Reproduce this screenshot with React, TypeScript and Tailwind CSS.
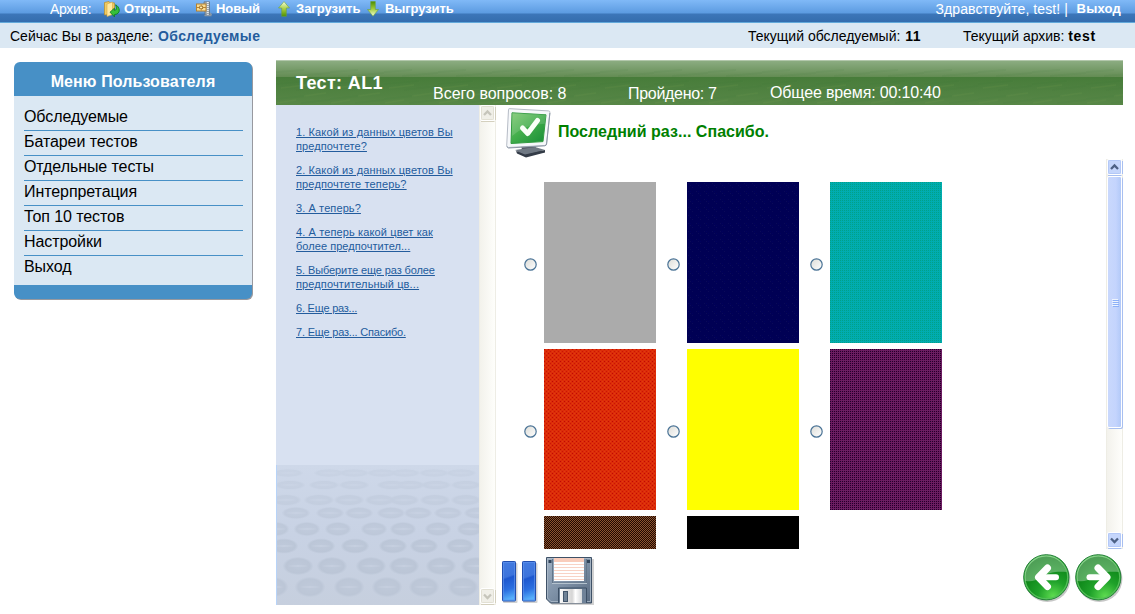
import React from 'react';

const menu = ['Обследуемые', 'Батареи тестов', 'Отдельные тесты', 'Интерпретация', 'Топ 10 тестов', 'Настройки', 'Выход'];

type Line = { text: string; style: string };

const questions: Line[][] = [
  [{ text: '1. Какой из данных цветов Вы', style: 'tracking-[0.12px]' }, { text: 'предпочтете?', style: 'tracking-[0.1px]' }],
  [{ text: '2. Какой из данных цветов Вы', style: 'tracking-[0.12px]' }, { text: 'предпочтете теперь?', style: 'tracking-[0.15px]' }],
  [{ text: '3. А теперь?', style: 'tracking-[0.1px]' }],
  [{ text: '4. А теперь какой цвет как', style: 'tracking-[0.12px]' }, { text: 'более предпочтител...', style: 'tracking-[0.05px]' }],
  [{ text: '5. Выберите еще раз более', style: 'tracking-[-0.1px]' }, { text: 'предпочтительный цв...', style: 'tracking-[0.12px]' }],
  [{ text: '6. Еще раз...', style: 'tracking-[-0.22px]' }],
  [{ text: '7. Еще раз... Спасибо.', style: 'tracking-[-0.2px]' }],
];

type Dither = { id: string; size: number; base: string; dots: [number, number, string][] };

const swatches: Dither[] = [
  { id: 'gray', size: 2, base: '#ababab', dots: [] },
  { id: 'navy', size: 8, base: '#000054', dots: [[1, 1, '#0a0a58'], [3, 3, '#0a0a58'], [5, 5, '#0a0a58'], [3, 1, '#00005c'], [5, 3, '#00005c']] },
  { id: 'teal', size: 2, base: '#00acb0', dots: [[0, 0, '#00a088']] },
  { id: 'red', size: 4, base: '#dc2c08', dots: [[0, 0, '#c00804'], [2, 2, '#cc1404'], [2, 0, '#e03c10'], [0, 2, '#e03c10']] },
  { id: 'yellow', size: 2, base: '#ffff00', dots: [] },
  { id: 'purple', size: 2, base: '#78125a', dots: [[0, 0, '#180430'], [1, 1, '#602868']] },
  { id: 'brown', size: 2, base: '#200800', dots: [[0, 0, '#8c5430'], [1, 1, '#8c5430']] },
  { id: 'black', size: 2, base: '#000000', dots: [] },
];

function Swatch({ s }: { s: Dither }) {
  return (
    <svg width="112" height="161" className="block shrink-0" shapeRendering="crispEdges">
      <defs>
        <pattern id={s.id} width={s.size} height={s.size} patternUnits="userSpaceOnUse">
          <rect width={s.size} height={s.size} fill={s.base} />
          {s.dots.map(([x, y, c]) => <rect key={`${x}-${y}`} x={x} y={y} width="1" height="1" fill={c} />)}
        </pattern>
      </defs>
      <rect width="112" height="161" fill={`url(#${s.id})`} />
    </svg>
  );
}

function Radio() {
  return (
    <svg width="13" height="13" viewBox="0 0 13 13" className="mt-[3px] block shrink-0">
      <defs>
        <linearGradient id="radio" x1="0" y1="0" x2="1" y2="1">
          <stop offset="0" stopColor="#dcdcd7" />
          <stop offset="1" stopColor="#ffffff" />
        </linearGradient>
      </defs>
      <circle cx="6.5" cy="6.5" r="5.7" fill="url(#radio)" stroke="#4a7396" strokeWidth="1.2" />
    </svg>
  );
}

function FolderIcon() {
  return (
    <svg width="16" height="16" viewBox="0 0 16 16">
      <path d="M.5 1.5 5 .5l1 1.4h4.5V13L.5 14z" fill="#f0cb62" stroke="#b98c24" strokeWidth=".7" />
      <path d="m3 3 5.5-2v12.5L3 15.5z" fill="#ffe9a0" stroke="#d8aa42" strokeWidth=".6" />
      <path d="M6 11.2 10.4 7.2v2.2c2.2 0 2.6-2 1.2-5.6 4 1.6 6.2 9.2-1.2 9.8v2.2z" fill="#36c03a" stroke="#087a1c" strokeWidth=".8" />
    </svg>
  );
}

function ZipIcon() {
  return (
    <svg width="16" height="16" viewBox="0 0 16 16">
      <path d="M8 .8h5.5V14H9V3.5H8z" fill="#9aa5ae" stroke="#63717d" strokeWidth=".7" />
      <path d="M11.8 1v14" stroke="#e8edf0" strokeWidth="2" strokeDasharray="1 1" />
      <rect x=".5" y="3" width="9.5" height="7" fill="#f8dc94" stroke="#b58230" />
      <path d="M1 6.5h9M5.2 3.5v6" stroke="#b98231" />
      <rect x="3.7" y="5.2" width="3" height="2.5" fill="#fff1ba" stroke="#9a681c" strokeWidth=".7" />
      <path d="M8.5 14.5h7M14 12l1.5 2" stroke="#8b98a5" strokeWidth="1.3" />
    </svg>
  );
}

function VArrow({ down = false }: { down?: boolean }) {
  return (
    <svg width="12" height="16" viewBox="0 0 12 16">
      <defs>
        <linearGradient id="arrowup" x1="0" y1="0" x2="0" y2="1">
          <stop offset="0" stopColor="#f6ffdf" />
          <stop offset=".5" stopColor="#a9cf42" />
          <stop offset="1" stopColor="#4f9000" />
        </linearGradient>
        <linearGradient id="arrowdown" x1="0" y1="0" x2="0" y2="1">
          <stop offset="0" stopColor="#4a8d00" />
          <stop offset=".5" stopColor="#a2cc3b" />
          <stop offset="1" stopColor="#f4ffd8" />
        </linearGradient>
      </defs>
      {down
        ? <path d="M3.7 .5h4.6V8.5h3.2L6 15.2.5 8.5h3.2z" fill="url(#arrowdown)" stroke="#69a13a" strokeWidth=".6" />
        : <path d="M6 .6 11.5 7H8.3v8.3H3.7V7H.5z" fill="url(#arrowup)" stroke="#69a13a" strokeWidth=".6" />}
    </svg>
  );
}

function ScrollButton({ down = false, disabled = false }: { down?: boolean; disabled?: boolean }) {
  return (
    <svg width="17" height="17" viewBox="0 0 17 17" className="block shrink-0">
      <rect x="1.5" y=".5" width="14" height="15" rx="1.5" fill={disabled ? '#f0efe8' : '#c5d6fc'} stroke="#ffffff" />
      <path d="M2 16.5h13.5M16.5 2v13" stroke={disabled ? '#d4d0be' : '#a8bff0'} strokeWidth="1" />
      <rect x="2.5" y="1.5" width="12" height="13" rx="1" fill="none" stroke={disabled ? '#e2e0d4' : '#b3c8f7'} />
      <path d={down ? 'm5 6.5 3.5 3.5L12 6.5' : 'M5 10l3.5-3.5L12 10'} fill="none" stroke={disabled ? '#c6c5bb' : '#4d6185'} strokeWidth="2.3" />
    </svg>
  );
}

function MonitorIcon() {
  return (
    <svg width="46" height="50" viewBox="0 0 46 50">
      <defs>
        <linearGradient id="screen" x1="0" y1="0" x2="1" y2="1">
          <stop offset="0" stopColor="#78c66b" />
          <stop offset=".45" stopColor="#43ae4b" />
          <stop offset="1" stopColor="#168d36" />
        </linearGradient>
      </defs>
      <path d="m15 38 14-2 1 5 9 3-20 4.5-8-5 5-2z" fill="#4d535d" />
      <path d="m9 42 20-3 10 3-20 5z" fill="#6f7883" />
      <path d="m10 43 9 3.5 20-4.5v2.5l-19 5-9-4z" fill="#333b47" />
      <path d="M2.5 1.5Q2.3.5 4 .7l38.5 2.2q1.7.1 1.4 1.8L40.5 36q-.2 1.4-1.7 1.5L2.5 39.5q-1.8 0-1.8-1.7z" fill="#f6f8fa" stroke="#b5bbc5" />
      <path d="M.8 38.5 2.5 40l36.3-2.2q1.5-.2 1.8-1.8l3.3-31" fill="none" stroke="#8c97a5" />
      <path d="m6 4.8 34 2-3 26.8L5 35.5z" fill="url(#screen)" stroke="#329b40" />
      <path d="m6 4.8 34 2-1 9Q20 16 6 28z" fill="#fff" opacity=".14" />
      <path d="m16.5 20 5.2 5.5L31.5 12.5" fill="none" stroke="#f9fff7" strokeWidth="5" strokeLinecap="round" strokeLinejoin="round" />
    </svg>
  );
}

function PauseIcon() {
  return (
    <svg width="36" height="43" viewBox="0 0 36 43">
      <defs>
        <linearGradient id="pause" x1="0" y1="0" x2=".12" y2="1">
          <stop offset="0" stopColor="#447ce0" />
          <stop offset=".42" stopColor="#3b73dc" />
          <stop offset=".47" stopColor="#1d57cf" />
          <stop offset=".75" stopColor="#2b6fe0" />
          <stop offset="1" stopColor="#56b0fa" />
        </linearGradient>
      </defs>
      {[0, 20].map((x) => (
        <g key={x}>
          <rect x={x + 1} y="2" width="14.5" height="40" rx="1" fill="#000" opacity=".18" />
          <rect x={x + 0.5} y=".5" width="13" height="39.5" rx=".8" fill="url(#pause)" stroke="#214fb0" />
          <rect x={x + 1.5} y="1.5" width="11" height="37.5" fill="none" stroke="#5c92ec" opacity=".7" />
        </g>
      ))}
    </svg>
  );
}

function FloppyIcon() {
  return (
    <svg width="48" height="48" viewBox="0 0 48 48">
      <defs>
        <linearGradient id="disk" x1="0" y1="0" x2="1" y2="1">
          <stop offset="0" stopColor="#a1b1c3" />
          <stop offset=".5" stopColor="#7c8fa5" />
          <stop offset="1" stopColor="#57697f" />
        </linearGradient>
        <linearGradient id="shutter" x1="0" y1="0" x2="1" y2="0">
          <stop offset="0" stopColor="#fafafa" />
          <stop offset=".55" stopColor="#d5d5d5" />
          <stop offset=".7" stopColor="#ffffff" />
          <stop offset="1" stopColor="#d7d9db" />
        </linearGradient>
      </defs>
      <path d="M2 2h46v46H6l-4-5z" fill="#000" opacity=".18" />
      <path d="M.5.5h45v45.500H4.500l-4-4z" fill="url(#disk)" stroke="#3e5167" />
      <path d="M1.500 1.500h43v43H5l-3.500-3.500z" fill="none" stroke="#aebdca" strokeWidth=".8" />
      <path d="M6.500 2v24h34V2" fill="none" stroke="#63768a" />
      <path d="M6 26.500h35" stroke="#b4c2ce" />
      <rect x="8" y="1" width="30" height="23" fill="#ffffff" />
      <rect x="8" y="1" width="30" height="4" fill="#f9cdbc" />
      {[7, 10, 13, 16, 19, 22].map((y) => <rect key={y} x="8" y={y} width="30" height="1" fill="#f8d3c6" />)}
      <path d="M2.500 3h3v3h-3zM41 3h3v3h-3z" fill="#31445a" />
      <path d="M12.500 46V31h28v15" fill="#6f8298" stroke="#3d5066" />
      <rect x="14" y="32" width="22" height="14" fill="url(#shutter)" />
      <rect x="17.500" y="34.500" width="4" height="10" fill="#6f8296" stroke="#42556a" />
    </svg>
  );
}

function RoundArrow({ right = false }: { right?: boolean }) {
  return (
    <svg width="48" height="49" viewBox="0 0 48 49">
      <defs>
        <radialGradient id="ball" cx=".65" cy=".92" r=".85">
          <stop offset="0" stopColor="#5edc50" />
          <stop offset=".4" stopColor="#1fa12a" />
          <stop offset="1" stopColor="#04780f" />
        </radialGradient>
      </defs>
      <circle cx="24.4" cy="25" r="23" fill="#000" opacity=".22" />
      <circle cx="23.300" cy="23.300" r="22.600" fill="url(#ball)" stroke="#247f39" />
      <circle cx="23.300" cy="23.300" r="21.400" fill="none" stroke="#56bf5a" strokeWidth="1.2" />
      <path d="M2.200 27A21 21 0 0 1 43.700 18C33 17 23 19 18 23 13 27 8 28 2.200 27z" fill="#fff" opacity=".3" />
      <path
        d={right ? 'M14.500 23.300H30' : 'M33 23.300H17'}
        fill="none" stroke="#ffffff" strokeWidth="6" strokeLinecap="round"
      />
      <path
        d={right ? 'M23 14l9 9.300-9 9.300' : 'M24.500 14l-9 9.300 9 9.300'}
        fill="none" stroke="#ffffff" strokeWidth="7" strokeLinecap="round" strokeLinejoin="round"
      />
    </svg>
  );
}

const lips: [number, number, number, number, number[]][] = [
  [8, 15, 4, 0.2, [12, 53, 78, 106, 129, 158, 185]],
  [20, 15, 4.5, 0.25, [14, 48, 78, 116, 134, 160, 190]],
  [35, 15, 5.5, 0.3, [10, 43, 73, 104, 128, 159, 190]],
  [48, 14, 6, 0.4, [20, 54, 83, 115, 142, 172, 202]],
  [64, 13, 7, 0.5, [0, 31, 62, 98, 127, 162, 194]],
  [81, 14, 7.5, 0.6, [8, 45, 79, 117, 148, 184]],
  [101, 15, 9, 0.6, [22, 56, 95, 128, 165, 200]],
  [122, 15, 10, 0.55, [-3, 34, 73, 111, 148, 187]],
];

function Texture() {
  return (
    <svg width="203" height="140" className="block">
      <defs>
        <linearGradient id="floor" x1="0" y1="0" x2="0" y2="1">
          <stop offset="0" stopColor="#ced8e9" />
          <stop offset=".5" stopColor="#c8d2e4" />
          <stop offset="1" stopColor="#c6cfde" />
        </linearGradient>
        <radialGradient id="shade">
          <stop offset="0" stopColor="#bac5d6" />
          <stop offset=".8" stopColor="#b4bfd0" />
          <stop offset="1" stopColor="#b9c4d5" stopOpacity=".2" />
        </radialGradient>
      </defs>
      <rect width="203" height="140" fill="url(#floor)" />
      {lips.map(([y, rx, ry, o, xs]) => (
        <g key={y} opacity={o}>
          {xs.map((x) => <ellipse key={x} cx={x} cy={y} rx={rx} ry={ry} fill="url(#shade)" />)}
          {xs.map((x) => <path key={x} d={`M${x - 11} ${y}q11-1.500 22 0-11 1.500-22 0`} fill="#d1d9e6" opacity=".65" />)}
        </g>
      ))}
      <rect width="1" height="140" fill="#b7d3f8" />
    </svg>
  );
}

function HeaderTexture() {
  return (
    <svg width="847" height="45" className="block">
      <defs>
        <linearGradient id="gloss" x1="0" y1="0" x2="0" y2="1">
          <stop offset="0" stopColor="#8eae84" />
          <stop offset="1" stopColor="#638c53" />
        </linearGradient>
        <linearGradient id="grass" x1="0" y1="0" x2="0" y2="1">
          <stop offset="0" stopColor="#477c3a" />
          <stop offset="1" stopColor="#588747" />
        </linearGradient>
        <pattern id="blades" width="54" height="45" patternUnits="userSpaceOnUse">
          <path d="M0 12 28 10M18 16 54 13M0 24 35 21M20 30 54 26M0 39 30 36M25 43 54 40" stroke="#2e692b" strokeWidth="2" opacity=".08" />
          <path d="M5 28 30 25M28 36 50 33M1 43 20 40" stroke="#7ca552" strokeWidth="1.5" opacity=".12" />
        </pattern>
      </defs>
      <rect width="847" height="17" fill="url(#gloss)" />
      <rect y="17" width="847" height="28" fill="url(#grass)" />
      <rect width="847" height="45" fill="url(#blades)" />
      <rect width="847" height="1" fill="#b3c8ac" />
    </svg>
  );
}

export default function App() {
  return (
    <div className="h-[614px] w-[1135px] overflow-hidden bg-white font-['Liberation_Sans',Arial,sans-serif] text-black">
      <header className="flex h-[23px] items-start border-b border-[#62a9da] bg-[linear-gradient(#80b9f7_0px,#5c9be1_13px,#3c76b9_14px,#346dae_22px)] pl-[50px] text-white">
        <span className="w-[54px] text-[14px] leading-[18px] tracking-[-0.3px]">Архив:</span>
        <a className="flex h-[18px] w-[92px] items-center gap-1 text-[13px] font-bold"><FolderIcon /><span className="tracking-[-0.1px]">Открыть</span></a>
        <a className="flex h-[18px] w-[82px] items-center gap-1 text-[13px] font-bold"><ZipIcon /><span className="tracking-[-0.1px]">Новый</span></a>
        <a className="flex h-[18px] w-[89px] items-center gap-[6px] text-[13px] font-bold"><VArrow /><span>Загрузить</span></a>
        <a className="flex h-[18px] items-center gap-[6px] text-[13px] font-bold"><VArrow down /><span className="tracking-[-0.1px]">Выгрузить</span></a>
        <div className="ml-auto mr-[14px] flex text-[14px] leading-[18px]">
          <span className="w-[141px] whitespace-nowrap tracking-[0.08px]">Здравствуйте, test! |</span>
          <b className="text-[13px] tracking-[0.2px]">Выход</b>
        </div>
      </header>
      <div className="flex h-[25px] bg-[#dbe8f3] pl-[10px] text-[14px] leading-[26px]">
        <span className="w-[148px] whitespace-nowrap">Сейчас Вы в разделе:</span>
        <b className="tracking-[0.4px] text-[#235c9d]">Обследуемые</b>
        <span className="ml-auto w-[215px] whitespace-nowrap">Текущий обследуемый: <b className="ml-px tracking-[0.5px]">11</b></span>
        <span className="w-[172px] whitespace-nowrap">Текущий архив: <b className="tracking-[0.6px]">test</b></span>
      </div>

      <div className="flex items-start pl-[14px] pt-3">
        <nav className="mr-[24px] mt-[2px] w-[238px] overflow-hidden rounded-[6px] bg-[#4790c6] shadow-[1px_1px_0_#98999f]">
          <h2 className="h-[34px] pt-[8px] text-center text-[16px] font-bold leading-[24px] tracking-[0.1px] text-white">Меню Пользователя</h2>
          <ul className="h-[189px] bg-[#dbe8f3] pl-[10px] pr-[9px] pt-[10px]">
            {menu.map((m) => (
              <li key={m} className="h-[25px] border-b border-[#4790c6] text-[16px] leading-[21px] tracking-[-0.08px] last:border-0">{m}</li>
            ))}
          </ul>
          <div className="h-[14px]" />
        </nav>

        <main className="w-[847px]">
          <div className="grid h-[45px]">
            <div className="col-start-1 row-start-1"><HeaderTexture /></div>
            <div className="z-10 col-start-1 row-start-1 flex whitespace-nowrap pl-[20px] text-[16px] text-white">
              <h1 className="w-[137px] pt-[11px] text-[18px] font-bold leading-[24px] tracking-[0.35px]">Тест: AL1</h1>
              <span className="w-[195px] pt-[24px] leading-[20px]">Всего вопросов: 8</span>
              <span className="w-[142px] pt-[24px] leading-[20px] tracking-[-0.3px]">Пройдено: 7</span>
              <span className="pt-[23px] leading-[20px] tracking-[-0.15px]">Общее время: 00:10:40</span>
            </div>
          </div>

          <div className="flex h-[500px]">
            <aside className="flex w-[203px] flex-col justify-between bg-[#d8e1f1]">
              <ol className="flex flex-col gap-[10px] pl-[20px] pt-[20px] text-[11px] leading-[14px] text-[#235c9d]">
                {questions.map((q) => (
                  <li key={q[0].text} className="whitespace-nowrap">
                    {q.map((l) => <a key={l.text} className={`block w-fit underline underline-offset-1 ${l.style}`}>{l.text}</a>)}
                  </li>
                ))}
              </ol>
              <Texture />
            </aside>
            <div className="flex w-[17px] flex-col justify-between border-x border-[#eeede5] bg-[linear-gradient(90deg,#f3f2ec,#fefefb)]">
              <div className="-mx-px"><ScrollButton disabled /></div>
              <div className="-mx-px"><ScrollButton disabled down /></div>
            </div>

            <section className="flex w-[627px] flex-col">
              <div className="flex h-[54px] pl-[10px] pt-[3px]">
                <MonitorIcon />
                <h3 className="ml-[6px] mt-[14px] text-[16px] font-bold leading-[20px] tracking-[0.03px] text-[#008000]">Последний раз... Спасибо.</h3>
              </div>
              <div className="flex h-[390px]">
                <div className="h-[390px] w-[610px] overflow-hidden pl-[28px] pt-[23px]">
                  <div className="grid grid-cols-[repeat(3,143px)] gap-y-[6px]">
                    {swatches.map((s) => (
                      <div key={s.id} className="flex items-center gap-[7px]"><Radio /><Swatch s={s} /></div>
                    ))}
                  </div>
                </div>
                <div className="flex w-[17px] flex-col border-x border-[#eeede5] bg-[linear-gradient(90deg,#f3f2ec,#fefefb)]">
                  <div className="-mx-px"><ScrollButton /></div>
                  <div className="flex h-[252px] w-[15px] flex-col items-center justify-center gap-px rounded-[2px] border border-white bg-[linear-gradient(90deg,#c9d8fc,#c4d4fd_60%,#b2c9f8)] shadow-[1px_1px_0_#a8bff0]">
                    {[0, 1, 2, 3].map((i) => <i key={i} className="block h-px w-[6px] bg-[#eef4fe] shadow-[1px_1px_0_#8cb0f8]" />)}
                  </div>
                  <div className="-mx-px mt-auto"><ScrollButton down /></div>
                </div>
              </div>
              <div className="flex h-[56px] items-start pl-[6px]">
                <div className="pt-[12px]"><PauseIcon /></div>
                <div className="ml-[8px] pt-[8px]"><FloppyIcon /></div>
                <div className="ml-auto flex gap-[4px] pt-[5px]"><RoundArrow /><RoundArrow right /></div>
              </div>
            </section>
          </div>
        </main>
      </div>
    </div>
  );
}
